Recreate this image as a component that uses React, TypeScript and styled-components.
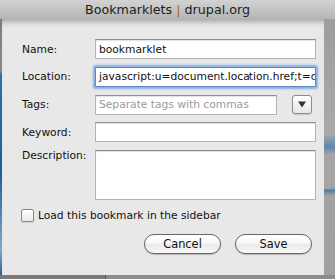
import React from "react";
import styled, { createGlobalStyle } from "styled-components";

const GlobalStyle = createGlobalStyle`
  html, body {
    margin: 0;
    padding: 0;
    background: #8a8a8a;
  }
  #root {
    width: 335px;
    height: 279px;
  }
`;

const Window = styled.div`
  width: 335px;
  height: 279px;
  display: flex;
  flex-direction: column;
  overflow: hidden;
  font-family: "DejaVu Sans", "Liberation Sans", sans-serif;
  color: #111;
`;

const TitleBar = styled.div`
  height: 19px;
  flex: none;
  display: flex;
  align-items: center;
  justify-content: center;
  background: linear-gradient(#d2d2d2, #b5b5b5);
  font-size: 12.7px;
  color: #1c1c1c;
  padding-bottom: 1px;
  box-sizing: border-box;
`;

const Pipe = styled.span`
  color: #a8641c;
`;

const Middle = styled.div`
  flex: 1;
  display: flex;
  min-height: 0;
`;

const Edge = styled.div<{ $w: number; $side: "left" | "right" }>`
  width: ${({ $w }) => $w}px;
  flex: none;
  background: ${({ $side }) =>
    $side === "left"
      ? "linear-gradient(#7c7c7c 0, #8a8a8a 20%, #2f6fa8 22%, #1f5d97 60%, #7fa8c8 90%, #2c5e8c 100%)"
      : "linear-gradient(#9d9d9d 0, #a9a9a9 45%, #5d87ad 50%, #a5a5a5 53%, #a5a5a5 66%, #4f7fa8 67%, #a2a2a2 69%, #a0a0a0 100%)"};
`;

const Sheet = styled.div`
  flex: 1;
  background: #e8e8e8;
  box-shadow: inset 0 7px 6px -5px rgba(0, 0, 0, 0.35);
  padding: 20px 8px 0 20px;
  display: flex;
  flex-direction: column;
  box-sizing: border-box;
`;

const BottomStrip = styled.div`
  height: 4px;
  flex: none;
  background: linear-gradient(90deg, #7a7a7a 0, #7a7a7a 105px, #555 105px, #555 106px, #8c8c8c 106px);
`;

const Form = styled.div`
  display: grid;
  grid-template-columns: 73px 1fr;
  row-gap: 7.75px;
  align-items: center;
`;

const Label = styled.label<{ $top?: boolean }>`
  font-size: 10.7px;
  color: #111;
  align-self: ${({ $top }) => ($top ? "start" : "center")};
  margin-top: ${({ $top }) => ($top ? "-1px" : "0")};
`;

const fieldBase = `
  box-sizing: border-box;
  height: 20px;
  border: 1px solid #b4b4b4;
  border-top-color: #8e8e8e;
  background: #fff;
  box-shadow: inset 0 1px 1px rgba(0, 0, 0, 0.12);
  font-family: "DejaVu Sans", "Liberation Sans", sans-serif;
  font-size: 10.7px;
  color: #111;
  padding: 0 3px;
  outline: none;
  margin: 0;
`;

const TextField = styled.input`
  ${fieldBase}
  width: 100%;
  &::placeholder {
    color: #9a9a9a;
  }
`;

const FocusedField = styled.div`
  ${fieldBase}
  width: 100%;
  display: flex;
  align-items: center;
  white-space: nowrap;
  overflow: hidden;
  border-color: #5a88c6;
  box-shadow: 0 0 0 1px #8db4e6, 0 0 2px 2px rgba(90, 140, 215, 0.65);
  border-radius: 1px;
`;

const Caret = styled.span`
  display: inline-block;
  width: 1px;
  height: 13px;
  background: #000;
  margin: 0 -0.5px;
`;

const TextArea = styled.textarea`
  ${fieldBase}
  width: 100%;
  height: 50px;
  resize: none;
  display: block;
`;

const TagsRow = styled.div`
  display: flex;
  align-items: center;
  gap: 15px;
  padding-right: 4px;
`;

const DropButton = styled.div`
  width: 20px;
  height: 19px;
  flex: none;
  box-sizing: border-box;
  border: 1px solid #8c8c8c;
  border-radius: 3px;
  background: linear-gradient(#ffffff, #f3f3f3 50%, #e6e6e6 100%);
  box-shadow: 0 1px 1px rgba(0, 0, 0, 0.15);
  display: flex;
  align-items: center;
  justify-content: center;
`;

const CheckRow = styled.div`
  margin-top: 9px;
  margin-left: -1px;
  display: flex;
  align-items: center;
  gap: 4px;
  font-size: 10.7px;
`;

const CheckBox = styled.span`
  width: 13px;
  height: 13px;
  box-sizing: border-box;
  border: 1px solid #8a8a8a;
  border-radius: 2px;
  background: linear-gradient(#ffffff, #f4f4f4 50%, #e9e9e9);
  box-shadow: 0 1px 1px rgba(0, 0, 0, 0.12);
`;

const ButtonRow = styled.div`
  margin-top: 12px;
  display: flex;
  justify-content: flex-end;
  gap: 14px;
  padding-right: 4px;
`;

const PushButton = styled.button`
  width: 77px;
  height: 20px;
  box-sizing: border-box;
  border: 1px solid #666;
  border-radius: 10px;
  background: linear-gradient(#ffffff, #f7f7f7 45%, #ebebeb 55%, #f8f8f8);
  box-shadow: 0 1px 1px rgba(0, 0, 0, 0.2);
  font-family: "DejaVu Sans", "Liberation Sans", sans-serif;
  font-size: 11.4px;
  color: #111;
  padding: 0;
  margin: 0;
`;

export default function App() {
  return (
    <>
      <GlobalStyle />
      <Window>
        <TitleBar>
          Bookmarklets&nbsp;<Pipe>|</Pipe>&nbsp;drupal.org
        </TitleBar>
        <Middle>
          <Edge $w={2} $side="left" />
          <Sheet>
            <Form>
              <Label>Name:</Label>
              <TextField defaultValue="bookmarklet" />
              <Label>Location:</Label>
              <FocusedField>
                javascript:u=document.loca
                <Caret />
                tion.href;t=d
              </FocusedField>
              <Label>Tags:</Label>
              <TagsRow>
                <TextField placeholder="Separate tags with commas" />
                <DropButton>
                  <svg width="8" height="7" viewBox="0 0 8 7">
                    <path d="M0 0.5 L8 0.5 L4 6.5 Z" fill="#333" />
                  </svg>
                </DropButton>
              </TagsRow>
              <Label>Keyword:</Label>
              <TextField />
              <Label $top>Description:</Label>
              <TextArea />
            </Form>
            <CheckRow>
              <CheckBox />
              Load this bookmark in the sidebar
            </CheckRow>
            <ButtonRow>
              <PushButton>Cancel</PushButton>
              <PushButton>Save</PushButton>
            </ButtonRow>
          </Sheet>
          <Edge $w={11} $side="right" />
        </Middle>
        <BottomStrip />
      </Window>
    </>
  );
}
